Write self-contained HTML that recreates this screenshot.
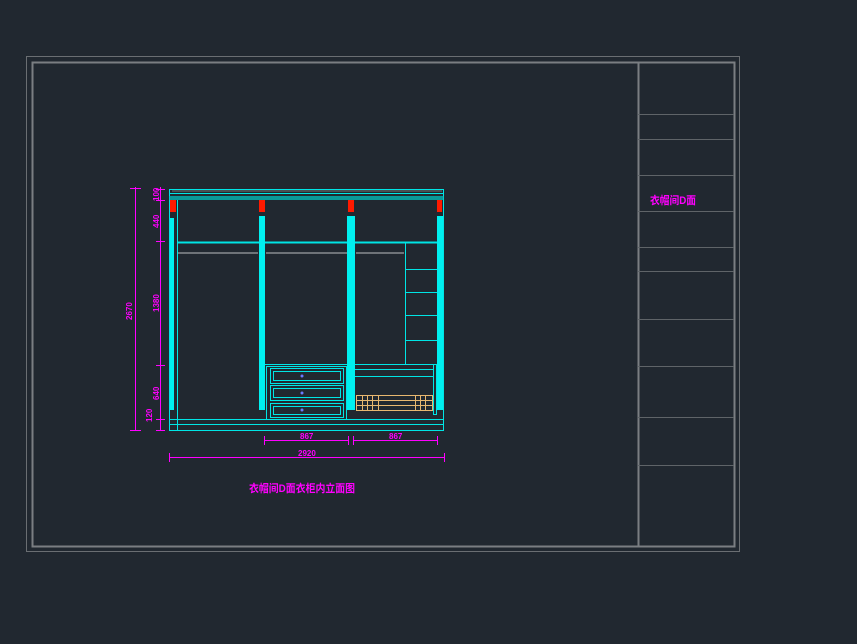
<!DOCTYPE html>
<html><head><meta charset="utf-8"><style>
html,body{margin:0;padding:0;background:#212830;width:857px;height:644px;overflow:hidden}
svg{display:block}
text{font-family:"Liberation Sans","Noto Sans CJK SC",sans-serif;fill:#ff00ff}
</style></head><body>
<svg width="857" height="644" viewBox="0 0 857 644">
<rect x="26.5" y="56.5" width="713" height="495" fill="none" stroke="#6a6e72" stroke-width="1"/>
<rect x="32.5" y="62.5" width="702" height="484" fill="none" stroke="#7a7e82" stroke-width="2"/>
<line x1="638.5" y1="62" x2="638.5" y2="547" stroke="#7a7e82" stroke-width="2"/>
<g stroke="#5f6468" stroke-width="1">
<line x1="638" y1="114.5" x2="734" y2="114.5"/><line x1="638" y1="139.5" x2="734" y2="139.5"/>
<line x1="638" y1="175.5" x2="734" y2="175.5"/><line x1="638" y1="211.5" x2="734" y2="211.5"/>
<line x1="638" y1="247.5" x2="734" y2="247.5"/><line x1="638" y1="271.5" x2="734" y2="271.5"/>
<line x1="638" y1="319.5" x2="734" y2="319.5"/><line x1="638" y1="366.5" x2="734" y2="366.5"/>
<line x1="638" y1="417.5" x2="734" y2="417.5"/><line x1="638" y1="465.5" x2="734" y2="465.5"/>
</g>
<text x="650" y="204" font-size="11" font-weight="bold" textLength="46" lengthAdjust="spacingAndGlyphs">衣帽间D面</text>

<!-- cabinet -->
<g fill="none" stroke="#00e5e5" stroke-width="1">
<rect x="169.5" y="189.5" width="274" height="241"/>
<line x1="169" y1="193.5" x2="444" y2="193.5"/>
<line x1="169" y1="419.5" x2="444" y2="419.5"/>
<line x1="169" y1="424.5" x2="444" y2="424.5"/>
<line x1="177" y1="242.5" x2="437" y2="242.5" stroke-width="2"/>
<line x1="177.5" y1="200" x2="177.5" y2="430"/>
<line x1="405.5" y1="242" x2="405.5" y2="364"/>
<line x1="405" y1="269.5" x2="437" y2="269.5"/><line x1="405" y1="292.5" x2="437" y2="292.5"/>
<line x1="405" y1="315.5" x2="437" y2="315.5"/><line x1="405" y1="340.5" x2="437" y2="340.5"/>
<line x1="265" y1="364.5" x2="437" y2="364.5"/>
<line x1="355" y1="369.5" x2="433" y2="369.5"/><line x1="355" y1="376.5" x2="433" y2="376.5"/>
<rect x="433.5" y="364.5" width="3" height="50"/>
<rect x="266.5" y="366.5" width="80" height="53"/>
<rect x="270.5" y="368.5" width="73" height="15"/><rect x="273.5" y="371.5" width="67" height="9"/>
<rect x="270.5" y="385.5" width="73" height="15"/><rect x="273.5" y="388.5" width="67" height="9"/>
<rect x="270.5" y="403.5" width="73" height="14"/><rect x="273.5" y="406.5" width="67" height="8"/>
</g>
<rect x="169" y="196" width="275" height="4" fill="#00c8c8" opacity="0.7"/>
<g stroke="#6e7378" stroke-width="2">
<line x1="178" y1="253" x2="258" y2="253"/><line x1="266" y1="253" x2="347" y2="253"/><line x1="356" y1="253" x2="404" y2="253"/>
<line x1="172" y1="191" x2="442" y2="191" stroke-width="1"/>
</g>
<g fill="#00f0f0">
<rect x="170" y="218" width="4" height="192"/>
<rect x="259" y="216" width="6" height="194"/>
<rect x="347" y="216" width="8" height="194"/>
<rect x="437" y="216" width="6" height="194"/>
</g>
<g fill="#ff1a00">
<rect x="170" y="200" width="6" height="12"/><rect x="259" y="200" width="6" height="12"/>
<rect x="348" y="200" width="6" height="12"/><rect x="437" y="200" width="5" height="12"/>
</g>
<g fill="none" stroke="#e8b870" stroke-width="1">
<rect x="356.5" y="395.5" width="76" height="15"/>
<line x1="357" y1="400.5" x2="432" y2="400.5"/><line x1="357" y1="405.5" x2="432" y2="405.5"/>
<line x1="362.5" y1="395" x2="362.5" y2="410"/><line x1="367.5" y1="395" x2="367.5" y2="410"/>
<line x1="372.5" y1="395" x2="372.5" y2="410"/><line x1="378.5" y1="395" x2="378.5" y2="410"/>
<line x1="415.5" y1="395" x2="415.5" y2="410"/><line x1="420.5" y1="395" x2="420.5" y2="410"/>
<line x1="425.5" y1="395" x2="425.5" y2="410"/>
</g>
<g fill="#6a7aff"><circle cx="302" cy="376" r="1.5"/><circle cx="302" cy="393" r="1.5"/><circle cx="302" cy="410" r="1.5"/></g>

<!-- dimensions -->
<g stroke="#ff00ff" stroke-width="1" fill="none">
<line x1="135.5" y1="187" x2="135.5" y2="431"/>
<line x1="130" y1="188.5" x2="141" y2="188.5"/><line x1="130" y1="430.5" x2="141" y2="430.5"/>
<line x1="160.5" y1="187" x2="160.5" y2="431"/>
<line x1="156" y1="189.5" x2="165" y2="189.5"/><line x1="156" y1="200.5" x2="165" y2="200.5"/>
<line x1="156" y1="241.5" x2="165" y2="241.5"/><line x1="156" y1="365.5" x2="165" y2="365.5"/>
<line x1="156" y1="419.5" x2="165" y2="419.5"/><line x1="156" y1="430.5" x2="165" y2="430.5"/>
<line x1="264" y1="440.5" x2="348" y2="440.5"/><line x1="353" y1="440.5" x2="437" y2="440.5"/>
<line x1="264.5" y1="436" x2="264.5" y2="445"/><line x1="348.5" y1="436" x2="348.5" y2="445"/>
<line x1="353.5" y1="436" x2="353.5" y2="445"/><line x1="437.5" y1="436" x2="437.5" y2="445"/>
<line x1="169" y1="457.5" x2="444" y2="457.5"/>
<line x1="169.5" y1="453" x2="169.5" y2="462"/><line x1="444.5" y1="453" x2="444.5" y2="462"/>
</g>
<g font-size="8" font-weight="bold">
<text x="132" y="320" transform="rotate(-90 132 320)">2670</text>
<text x="159" y="201" transform="rotate(-90 159 201)">100</text>
<text x="159" y="228" transform="rotate(-90 159 228)">440</text>
<text x="159" y="312" transform="rotate(-90 159 312)">1380</text>
<text x="159" y="400" transform="rotate(-90 159 400)">640</text>
<text x="152" y="422" transform="rotate(-90 152 422)">120</text>
<text x="300" y="439">867</text>
<text x="389" y="439">867</text>
<text x="298" y="456">2920</text>
</g>
<text x="249" y="492" font-size="11" font-weight="bold" textLength="106" lengthAdjust="spacingAndGlyphs">衣帽间D面衣柜内立面图</text>
</svg>
</body></html>
